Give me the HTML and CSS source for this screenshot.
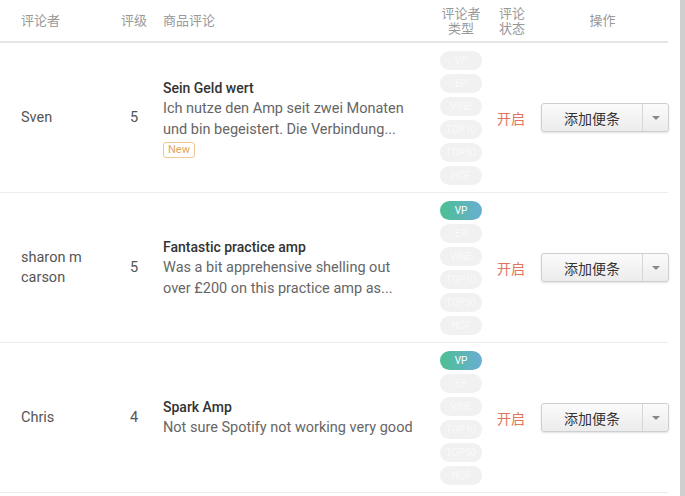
FILE: index.html
```html
<!DOCTYPE html>
<html>
<head>
    <title>商品评论</title>
    <link rel="stylesheet" href="styles.css">
</head>
<body>
    <div class="page">
        <div class="panel">
            <table class="reviews">
                <colgroup>
                    <col class="c-name">
                    <col class="c-rate">
                    <col class="c-text">
                    <col class="c-type">
                    <col class="c-state">
                    <col class="c-ops">
                </colgroup>
                <thead>
                    <tr>
                        <th class="name">评论者</th>
                        <th class="rate">评级</th>
                        <th class="text">商品评论</th>
                        <th class="type">评论者<br>类型</th>
                        <th class="state">评论<br>状态</th>
                        <th class="ops">操作</th>
                    </tr>
                </thead>
                <tbody>
                    <tr>
                        <td class="name">Sven</td>
                        <td class="rate">5</td>
                        <td class="text">
                            <div class="title">Sein Geld wert</div>
                            <div class="body">Ich nutze den Amp seit zwei Monaten und bin begeistert. Die Verbindung...</div>
                            <span class="tag-new">New</span>
                        </td>
                        <td class="type">
                            <div class="pills">
                                <span class="pill">VP</span>
                                <span class="pill">EP</span>
                                <span class="pill">VINE</span>
                                <span class="pill">TOP10</span>
                                <span class="pill">TOP50</span>
                                <span class="pill">HOF</span>
                            </div>
                        </td>
                        <td class="state"><span class="on">开启</span></td>
                        <td class="ops">
                            <div class="split-btn">
                                <button class="main">添加便条</button>
                                <button class="caret"><span class="tri"></span></button>
                            </div>
                        </td>
                    </tr>
                    <tr>
                        <td class="name">sharon m<br>carson</td>
                        <td class="rate">5</td>
                        <td class="text">
                            <div class="title">Fantastic practice amp</div>
                            <div class="body">Was a bit apprehensive shelling out over £200 on this practice amp as...</div>
                        </td>
                        <td class="type">
                            <div class="pills">
                                <span class="pill active">VP</span>
                                <span class="pill">EP</span>
                                <span class="pill">VINE</span>
                                <span class="pill">TOP10</span>
                                <span class="pill">TOP50</span>
                                <span class="pill">HOF</span>
                            </div>
                        </td>
                        <td class="state"><span class="on">开启</span></td>
                        <td class="ops">
                            <div class="split-btn">
                                <button class="main">添加便条</button>
                                <button class="caret"><span class="tri"></span></button>
                            </div>
                        </td>
                    </tr>
                    <tr>
                        <td class="name">Chris</td>
                        <td class="rate">4</td>
                        <td class="text">
                            <div class="title">Spark Amp</div>
                            <div class="body">Not sure Spotify not working very good</div>
                        </td>
                        <td class="type">
                            <div class="pills">
                                <span class="pill active">VP</span>
                                <span class="pill">EP</span>
                                <span class="pill">VINE</span>
                                <span class="pill">TOP10</span>
                                <span class="pill">TOP50</span>
                                <span class="pill">HOF</span>
                            </div>
                        </td>
                        <td class="state"><span class="on">开启</span></td>
                        <td class="ops">
                            <div class="split-btn">
                                <button class="main">添加便条</button>
                                <button class="caret"><span class="tri"></span></button>
                            </div>
                        </td>
                    </tr>
                </tbody>
            </table>
        </div>
        <div class="edge"></div>
    </div>
</body>
</html>
```

FILE: styles.css
```css
body {
    margin: 0;
    padding: 0;
    background-color: #fff;
    font-family: Roboto, "Noto Sans CJK SC", sans-serif;
    color: #555;
}

.page {
    display: flex;
    height: 496px;
    overflow: hidden;
}

.panel {
    width: 680px;
}

.edge {
    flex: 1;
    background-color: #cfcfcf;
}

/* table */
.reviews {
    width: 668px;
    table-layout: fixed;
    border-collapse: collapse;
}

.c-name { width: 110px; }
.c-rate { width: 48px; }
.c-text { width: 277px; }
.c-type { width: 52px; }
.c-state { width: 50px; }
.c-ops { width: 131px; }

.reviews th {
    height: 41px;
    padding: 0;
    font-size: 13px;
    font-weight: normal;
    color: #999;
    line-height: 15px;
    border-bottom: 2px solid #e6e6e6;
    vertical-align: middle;
}

.reviews td {
    height: 149px;
    padding: 0;
    font-size: 14.5px;
    vertical-align: middle;
    border-bottom: 1px solid #ececec;
}

.reviews th.name,
.reviews td.name {
    text-align: left;
    padding-left: 21px;
    line-height: 20px;
}

.reviews th.rate,
.reviews td.rate {
    text-align: center;
}

.reviews th.text,
.reviews td.text {
    text-align: left;
    padding-left: 5px;
}

.reviews th.type,
.reviews th.state,
.reviews th.ops {
    text-align: center;
}

.title {
    font-size: 14px;
    font-weight: 500;
    color: #333;
    line-height: 20px;
}

.body {
    width: 256px;
    color: #666;
    line-height: 21px;
}

.tag-new {
    display: inline-block;
    margin-top: 2px;
    padding: 0 4px;
    font-size: 11px;
    line-height: 14px;
    color: #e3a65c;
    border: 1px solid #efc795;
    border-radius: 3px;
}

/* reviewer type pills */
.pills {
    display: flex;
    flex-direction: column;
    align-items: center;
    gap: 4px;
}

.pill {
    width: 42px;
    height: 19px;
    line-height: 19px;
    border-radius: 10px;
    background-color: #f1f1f1;
    color: #f9f9f9;
    font-size: 10px;
    text-align: center;
}

.pill.active {
    background: linear-gradient(to right, #4cbf93, #6aaed3);
    color: #fff;
}

.reviews td.state {
    padding-left: 10px;
}

.on {
    color: #e2745e;
    font-size: 14px;
}

/* split button */
.reviews td.ops {
    padding-left: 4px;
}

.split-btn {
    display: flex;
    width: 128px;
    height: 29px;
    border: 1px solid #cfcfcf;
    border-radius: 3px;
    box-sizing: border-box;
    background: linear-gradient(#fbfbfb, #ececec);
    box-shadow: 0 1px 2px rgba(0, 0, 0, 0.12);
}

.split-btn button {
    border: none;
    background: transparent;
    padding: 0;
    font-family: Roboto, "Noto Sans CJK SC", sans-serif;
    cursor: pointer;
}

.split-btn .main {
    width: 101px;
    font-size: 14px;
    color: #333;
    border-right: 1px solid #d6d6d6;
}

.split-btn .caret {
    flex: 1;
    display: flex;
    align-items: center;
    justify-content: center;
}

.tri {
    width: 0;
    height: 0;
    border-left: 4px solid transparent;
    border-right: 4px solid transparent;
    border-top: 4px solid #888;
}
```
